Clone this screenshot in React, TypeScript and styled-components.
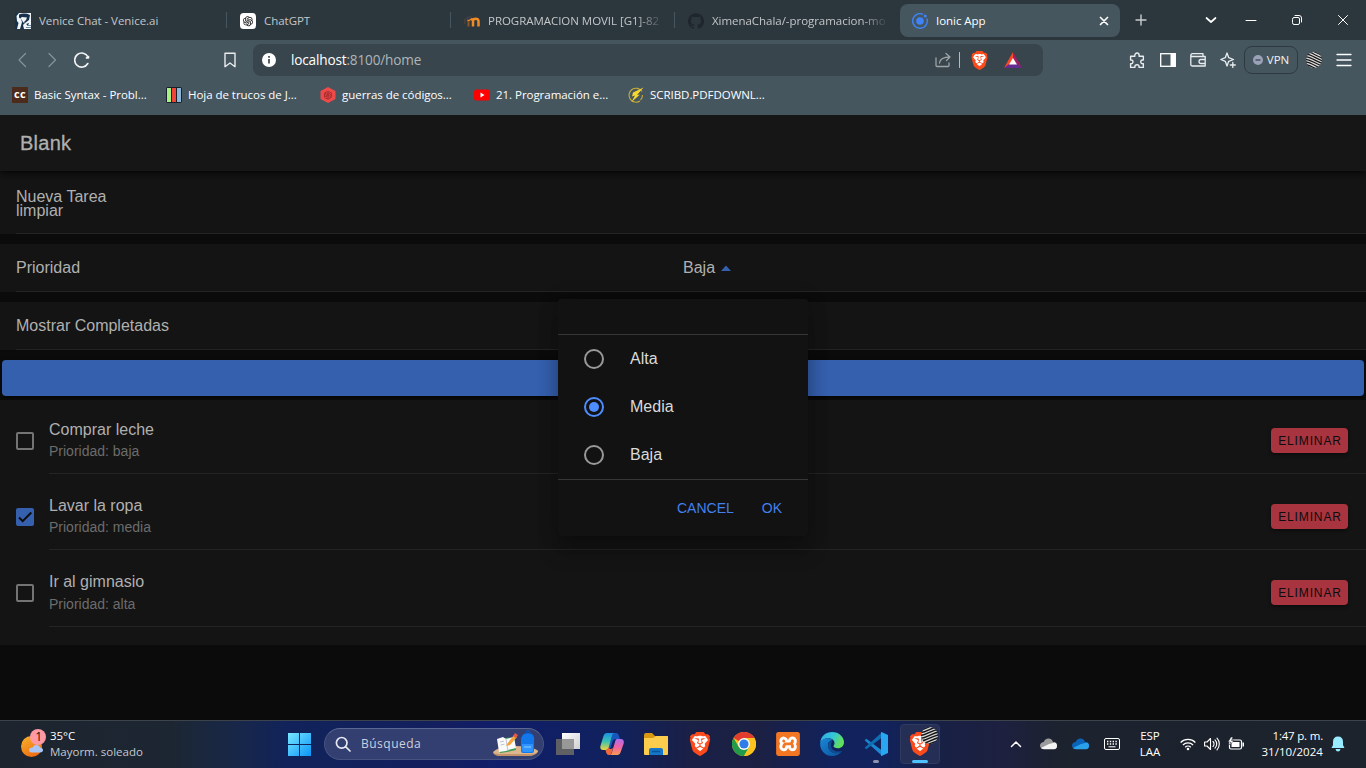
import React from "react";
import styled, { createGlobalStyle, css } from "styled-components";
import { SiBrave, SiGithub, SiXampp } from "react-icons/si";
import { AiOutlineOpenAI } from "react-icons/ai";

const Global = createGlobalStyle`
  * { box-sizing: border-box; }
  body { margin: 0; background: #0b0b0b; overflow: hidden; }
`;

const ui = css`font-family: "Open Sans", "Noto Sans", sans-serif;`;

const Screen = styled.div`
  width: 1366px; height: 768px; display: flex; flex-direction: column; overflow: hidden;
  font-family: "Liberation Sans", Arial, sans-serif;
`;

const Label = styled.span<{ $size?: number; $track?: number; $color?: string }>`
  ${ui}
  display: block; white-space: nowrap; line-height: 16px;
  font-size: ${p => p.$size ?? 11.5}px;
  letter-spacing: ${p => p.$track ?? -0.04}px;
  color: ${p => p.$color ?? "#fff"};
`;

/* ---------- browser ---------- */
const TabStrip = styled.div`
  height: 40px; flex: none; display: flex; background: #2c363d;
`;
const Tab = styled.div<{ $first?: boolean }>`
  width: ${p => (p.$first ? 226 : 224)}px; height: 40px; display: flex; align-items: center; gap: 8px;
  padding: 1px 11px 0 ${p => (p.$first ? 15 : 14)}px;
`;
const TabText = styled.div<{ $fade?: boolean }>`
  flex: 1; overflow: hidden;
  ${p => p.$fade && "mask-image: linear-gradient(90deg, #000 85%, transparent 101%);"}
`;
const Divider = styled.i`
  width: 1px; height: 16px; align-self: center; background: #45565f; margin-right: -1px;
`;
const ActiveTab = styled.div`
  width: 220px; height: 33px; margin: 4px 0 0 2px; padding: 0 10px 0 12px; border-radius: 8px; background: #45565f;
  display: flex; align-items: center; gap: 8px;
  > span { flex: 1; }
`;
const WindowControls = styled.div`
  flex: 1; display: flex; align-items: center; justify-content: flex-end;
`;
const Slot = styled.div<{ $w: number }>`
  width: ${p => p.$w}px; flex: none; display: flex; align-items: center; justify-content: center;
  svg { flex: none; }
`;
const Spacer = styled.div`flex: 1;`;

const Toolbar = styled.div`
  height: 40px; flex: none; display: flex; align-items: center; background: #45565f; padding-left: 8px;
`;
const AddressBar = styled.div`
  width: 790px; height: 32px; border-radius: 8px; background: #39454c; display: flex; align-items: center;
  padding: 0 13px 0 8px; margin-left: 8px; flex: none;
`;
const Url = styled.div`
  ${ui} flex: 1; font-size: 13.6px; letter-spacing: -0.17px; color: #aeb5b8; line-height: 20px; margin-left: 14px;
  b { font-weight: 400; color: #fff; }
`;
const Vpn = styled.div`
  width: 54px; height: 28px; border: 1px solid #2e3a42; border-radius: 8px; display: flex; align-items: center;
  justify-content: center; gap: 4px; margin-left: 2px;
`;
const Bookmarks = styled.div`
  height: 35px; flex: none; display: flex; background: #45565f; padding: 7px 0 0 12px;
`;
const Bookmark = styled.div<{ $w: number }>`
  width: ${p => p.$w}px; height: 16px; display: flex; align-items: center; gap: 6px;
`;
const CcBadge = styled.span`
  ${ui} width: 16px; height: 16px; background: #4c2b1c; color: #fff; font-size: 11px; font-weight: 700; line-height: 14px; text-align: center;
  flex: none; letter-spacing: .4px;
`;

/* ---------- ionic page ---------- */
const Page = styled.main`
  position: relative; height: 605px; flex: none; background: #0b0b0b; color: #b0b0b0; overflow: hidden;
`;
const PageHeader = styled.header`
  position: relative; height: 56px; padding-left: 20px; background: #161616; font-size: 20px; line-height: 56px; font-weight: 500;
  box-shadow: 0 2px 4px -1px rgba(0,0,0,.5), 0 4px 5px rgba(0,0,0,.3);
  span { -webkit-text-stroke: .3px currentColor; letter-spacing: .25px; }
`;
const Item = styled.div<{ $h: number }>`
  height: ${p => p.$h}px; margin-bottom: 10px; padding-left: 16px; background: #141414; font-size: 16px;
`;
const ItemInner = styled.div<{ $stack?: boolean }>`
  height: 100%; border-bottom: 1px solid #242424; display: flex;
  ${p => p.$stack
    ? "flex-direction: column; padding-top: 19px; line-height: 14px;"
    : "line-height: 48px;"}
`;
const Half = styled.div`width: 667px; display: flex; align-items: center; gap: 6px;`;
const AddButton = styled.div`
  height: 36px; margin: 0 2px 4px; border-radius: 4px; background: #3560ae;
  box-shadow: 0 3px 1px -2px rgba(0,0,0,.2), 0 2px 2px rgba(0,0,0,.14), 0 1px 5px rgba(0,0,0,.12);
`;
const TaskList = styled.div`height: 245px; background: #141414;`;
const TaskRow = styled.div<{ $h: number }>`
  height: ${p => p.$h}px; padding-left: 16px; display: flex; gap: 15px; align-items: flex-end;
`;
const Check = styled.div<{ $on?: boolean; $bottom: number }>`
  width: 18px; height: 18px; flex: none; margin-bottom: ${p => p.$bottom}px; border-radius: 2px;
  border: 2px solid ${p => (p.$on ? "#3560ae" : "#747474")};
  background: ${p => (p.$on ? "#3560ae" : "transparent")};
  svg { display: block; margin: -2px; }
`;
const TaskBody = styled.div<{ $h: number }>`
  flex: 1; height: ${p => p.$h}px; border-bottom: 1px solid #242424; display: flex; justify-content: space-between;
  padding-right: 18px;
`;
const TaskTitle = styled.div<{ $gap: number }>`
  font-size: 16px; line-height: 20px; margin-bottom: ${p => p.$gap}px; padding-top: 22px;
`;
const TaskMeta = styled.div`font-size: 14px; line-height: 18px; color: #6c6c6c;`;
const Delete = styled.button`
  width: 77px; height: 25px; margin: 30px 0 0; padding: 1px 0 0 1px; border: 0; border-radius: 4px; background: #a8343f;
  color: #0d0d0d; font: 400 12px/24px "Liberation Sans", Arial, sans-serif; letter-spacing: .86px;
  box-shadow: 0 2px 2px rgba(0,0,0,.25), 0 1px 5px rgba(0,0,0,.12);
`;

const Alert = styled.div`
  position: absolute; left: 558px; top: 184px; width: 250px; height: 237px; border-radius: 3px; background: #121212;
  box-shadow: 0 16px 20px rgba(0,0,0,.25), 0 0 20px rgba(0,0,0,.2); color: #dadada;
`;
const AlertGroup = styled.div`
  margin-top: 35px; border-top: 1px solid #363636; border-bottom: 1px solid #363636; height: 146px;
`;
const Option = styled.div`
  height: 48px; padding-left: 26px; display: flex; align-items: center; gap: 26px; font-size: 16px; line-height: 46px;
  span { padding-bottom: 1px; }
`;
const Radio = styled.i<{ $on?: boolean }>`
  width: 20px; height: 20px; border-radius: 50%; border: 2px solid ${p => (p.$on ? "#4d8dff" : "#999")};
  display: flex; align-items: center; justify-content: center;
  &::after { content: ""; width: 10px; height: 10px; border-radius: 50%; background: ${p => (p.$on ? "#4d8dff" : "transparent")}; }
`;
const AlertActions = styled.div`
  display: flex; justify-content: flex-end; gap: 28px; padding: 19px 26px 0 0; font-size: 14px; line-height: 18px; color: #4480ec;
`;

/* ---------- taskbar ---------- */
const Taskbar = styled.footer`
  height: 48px; flex: none; display: flex; align-items: center; border-top: 1px solid #3d434a; padding-bottom: 1px;
  background: linear-gradient(90deg, #1d242e 0, #1c2632 170px, #182748 235px, #11235a 285px, #131f5e 440px, #101d6a 500px,
    #11215c 620px, #1a2046 690px, #1b2043 760px, #11225c 830px, #11225c 880px, #182044 945px, #1d2040 1000px, #1c222e 1060px, #1c232c 1366px);
`;
const Weather = styled.div`
  width: 277px; display: flex; gap: 3px; padding-left: 20px; align-items: center;
`;
const Search = styled.div`
  width: 220px; height: 32px; margin: 0 2px 0 3px; border-radius: 16px; background: #323f70; border: 1px solid #46527f; border-top-color: #5c6793;
  display: flex; align-items: center; padding: 0 4px 0 10px; gap: 10px;
  > span { flex: 1; }
`;
const AppSlot = styled.div<{ $active?: boolean }>`
  width: ${p => (p.$active ? 40 : 44)}px; height: 40px; position: relative; display: flex; align-items: center; justify-content: center;
  ${p => p.$active && "margin-left: 2px; border-radius: 4px; background: #252f55; border: 1px solid #303a5e;"}
`;
const Running = styled.i<{ $active?: boolean }>`
  position: absolute; bottom: ${p => (p.$active ? 0 : 1)}px; width: ${p => (p.$active ? 16 : 6)}px; height: 3px; border-radius: 2px;
  background: ${p => (p.$active ? "#4cc2ff" : "#8d93ad")};
`;
const BadgeOver = styled.span`position: absolute; right: 1px; top: 2px; display: flex;`;
const TwoLine = styled.div<{ $w: number; $align: string }>`
  width: ${p => p.$w}px; text-align: ${p => p.$align};
`;

const LionShield = ({ s }: { s: number }) => (
  <svg width={s} height={s} viewBox="0 0 24 24">
    <path d="M6 3h12l3 5-3 10-6 5-6-5L3 8z" fill="#fff" />
    <SiBrave size={24} color="#fb4a1c" />
  </svg>
);

const Stripes = ({ s }: { s: number }) => (
  <svg width={s} height={s} viewBox="0 0 16 16">
    <defs><clipPath id={"c" + s}><circle cx="8" cy="8" r="8" /></clipPath></defs>
    <g clipPath={`url(#c${s})`}>
      <rect width="16" height="16" fill="#151515" />
      <g stroke="#d6d6d6" strokeWidth="1.2" fill="none">
        {[-7.5, -4.8, -2.1, 0.6, 3.3, 6, 8.7, 11.4, 14.1].map(y => (
          <path key={y} d={s > 16 ? `M-1 ${y + 6}C5 ${y + 6} 10 ${y + 1} 17 ${y}` : `M-1 ${y}C5 ${y} 10 ${y + 5} 17 ${y + 7}`} />
        ))}
      </g>
    </g>
  </svg>
);

const Venice = () => (
  <svg width="16" height="16" viewBox="0 0 16 16">
    <rect width="16" height="16" fill="#f1f5f8" />
    <path d="M0 0h4L1.500 3 2 8l1.500 2L2 16H0zM4 1.500Q10-.5 15 2l-1 5-4 3H8l3-3 1-2.500-5-.5-2 1.500-1-1zM5.500 5L7 9l-2 7h4l-1-4 2-2-2-1zM11 11l3-1-1 2.500z" fill="#17324d" />
    <path d="M11 14.500h5M12 12.500h4" stroke="#6c8aa3" />
  </svg>
);
const GptIcon = () => (
  <svg width="16" height="16" viewBox="0 0 16 16">
    <rect width="16" height="16" rx="3.5" fill="#fff" />
    <svg x="1.500" y="1.500" width="13" height="13"><AiOutlineOpenAI size={13} color="#222" /></svg>
  </svg>
);
const Moodle = () => (
  <svg width="16" height="16" viewBox="0 0 16 16" fill="none">
    <path d="M4.500 13.500V8" stroke="#8a5426" strokeWidth="2" />
    <path d="M4.500 8q0-2 2.200-2T9 8v5.500M9 8q0-2.200 2.600-2.200T14.500 8v5.500" stroke="#f08a24" strokeWidth="2.500" />
    <path d="M0 5.500l5-3 4 1.500-4 3z" fill="#3a3e44" /><path d="M1 6v5" stroke="#5b4535" />
  </svg>
);
const IonicIcon = () => (
  <svg width="16" height="16" viewBox="0 0 16 16" fill="#3f83f8">
    <circle cx="8" cy="8" r="3.8" /><circle cx="13.200" cy="3" r="1.600" />
    <path d="M10.9 1.3A7.3 7.3 0 1 0 14.8 5.4" fill="none" stroke="#3f83f8" strokeWidth="1.4" />
  </svg>
);
const Line = ({ d, s = 16, w = 1.3, c = "#e9ecee", box = 16, f = "none" }: { d: string; s?: number; w?: number; c?: string; box?: number; f?: string }) => (
  <svg width={s} height={s} viewBox={`0 0 ${box} ${box}`} fill={f} stroke={c} strokeWidth={w} strokeLinecap="round" strokeLinejoin="round"><path d={d} /></svg>
);
const BatIcon = () => (
  <svg width="18" height="16" viewBox="0 0 18 16">
    <path d="M9 0L0 16 9 12z" fill="#ff4724" /><path d="M9 0l9 16-9-6z" fill="#9e1f63" /><path d="M0 16h18l-5-4H5z" fill="#662d91" />
    <path d="M9 6l4 6.500H5z" fill="#fff" />
  </svg>
);
const Chrome = () => (
  <svg width="24" height="24" viewBox="0 0 24 24">
    <circle cx="12" cy="12" r="12" fill="#fcc31e" />
    <path d="M12 12L1.600 6A12 12 0 0 1 22.400 6H12z" fill="#e33b2e" />
    <path d="M1.600 6A12 12 0 0 0 12 24l5.200-9L12 12 6.800 15z" fill="#229a4b" />
    <path d="M12 6h10.400A12 12 0 0 1 12 24l5.200-9z" fill="#fcc31e" />
    <circle cx="12" cy="12" r="5.900" fill="#fff" /><circle cx="12" cy="12" r="4.600" fill="#2f7de9" />
  </svg>
);
const Edge = () => (
  <svg width="24" height="24" viewBox="0 0 24 24">
    <defs>
      <linearGradient id="eg" x1="0" y1="0" x2="1" y2=".4"><stop offset="0" stopColor="#2aa9e6" /><stop offset=".55" stopColor="#35c6d8" /><stop offset="1" stopColor="#62e05a" /></linearGradient>
      <linearGradient id="eb" x1="0" y1="0" x2=".8" y2="1"><stop offset="0" stopColor="#1b86d6" /><stop offset="1" stopColor="#0c59a4" /></linearGradient>
    </defs>
    <path d="M.2 10.500C1 4 6 0 12 0c7 0 12 5 12 10.200 0 3.800-2.800 6-6 6-3 0-4.500-1.200-4.500-2 0-.7 1-1.200 1-3.200 0-2.500-2.200-4.800-6-4.800C4.500 6.200 1.500 8 .2 10.500z" fill="url(#eg)" />
    <path d="M.2 10.500C1.500 7.500 4.500 6.200 8 6.200c2 0 4 .8 5 2-3-.5-5 2-5 5.300 0 5 5 8.500 9.500 7.500 2-.4 3.500-1.300 4.500-2C20 22 16 24 12 24 5 24-.6 18 .2 10.500z" fill="url(#eb)" />
    <path d="M8 13.500C8 17 10.500 21 16 21.200c2.500 0 4.500-1 6-2.200-6 1.500-11-.5-11-6 0-1.500.8-3 1.600-4C10 8.500 8 10.500 8 13.500z" fill="#104c92" />
  </svg>
);
const VsCode = () => (
  <svg width="24" height="24" viewBox="0 0 24 24">
    <path d="M.6 8.200L2.300 6.700 18 18.500v5.300z" fill="#1a87d2" />
    <path d="M.6 15.800l1.700 1.500L18 5.500V.2z" fill="#0d6eb4" />
    <path d="M17.500 0L24 3v18l-6.500 3c-.7 0-.5-.5-.5-1V1c0-.5-.2-1 .5-1z" fill="#2aa5f0" />
  </svg>
);
const Copilot = () => (
  <svg width="24" height="24" viewBox="0 0 24 24">
    <defs>
      <linearGradient id="ca" x1="0" y1="0" x2="0" y2="1"><stop offset="0" stopColor="#1b8fe6" /><stop offset=".5" stopColor="#3cc3b0" /><stop offset="1" stopColor="#f1d33c" /></linearGradient>
      <linearGradient id="cb" x1="0" y1="0" x2="0" y2="1"><stop offset="0" stopColor="#b06df0" /><stop offset=".5" stopColor="#ef63a4" /><stop offset="1" stopColor="#fb9b52" /></linearGradient>
    </defs>
    <path d="M13 1h3c2 0 2.500 1.500 3 3l1 3h-4c-2 0-3 1-3.500 3l-2 6H8z" fill="#1757bd" />
    <path d="M7 1h7c-1 .5-1.700 2-2 3L8.800 15c-.5 2-1.500 3-3 3H3c-3 0-3-3-2.300-5L3.500 4C4.200 2 5 1 7 1z" fill="url(#ca)" />
    <path d="M17 7h4c3 0 3.200 3 2.500 5l-2.800 8c-.7 2-1.700 3-3.500 3H10c1-.5 1.700-1.500 2-3l3-10c.5-2 1-3 2-3z" fill="url(#cb)" />
    <path d="M8.500 15.500L10 17h1l2-1-1.500 5c-.5 1.500-1 2-2.500 2-2 0-2.500-1.500-3-3l-.5-2c1.500 0 2.500-1 3-2.500z" fill="#f0683c" />
  </svg>
);

const Cloud = ({ a, b }: { a: string; b: string }) => (
  <svg width="17" height="12" viewBox="0 0 17 12">
    <path d="M3.500 4.500C4.500 1 7.500 0 10 .8c1.700.5 2.500 1.800 3 3.200 2.500 0 4 2 4 4L7 8z" fill={a} />
    <path d="M4 4c2-.5 3 0 4 .8L17 8c0 2-1.200 3-3 3H3.800C1.500 11 0 9.500 0 7.500S2 4 4 4z" fill={a} />
    <path d="M1 10l8-4 6-1.500c1.500.5 2 1.800 2 3.500 0 2-1.200 3.200-3 3.200H3.800C2.500 11.200 1.500 10.700 1 10z" fill={b} />
  </svg>
);

const tasks = [
  { title: "Comprar leche", priority: "baja", done: false, h: 74, body: 76, gap: 2 },
  { title: "Lavar la ropa", priority: "media", done: true, h: 76, body: 76, gap: 2 },
  { title: "Ir al gimnasio", priority: "alta", done: false, h: 77, body: 77, gap: 3 },
];

export default function App() {
  return (
    <Screen>
      <Global />
      <TabStrip>
        <Tab $first><Venice /><TabText><Label $color="#c3c7c9">Venice Chat - Venice.ai</Label></TabText></Tab>
        <Divider />
        <Tab><GptIcon /><TabText><Label $color="#c3c7c9">ChatGPT</Label></TabText></Tab>
        <Divider />
        <Tab><Moodle /><TabText $fade><Label $color="#c3c7c9">PROGRAMACION MOVIL [G1]-82</Label></TabText></Tab>
        <Divider />
        <Tab><SiGithub size={16} color="#1f262d" style={{ flex: "none" }} /><TabText $fade><Label $color="#c3c7c9">XimenaChala/-programacion-mo</Label></TabText></Tab>
        <ActiveTab>
          <IonicIcon /><Label>Ionic App</Label>
          <Line s={12} box={12} w={1.7} c="#fff" d="M2.500 2.500l7 7M9.500 2.500l-7 7" />
        </ActiveTab>
        <Slot $w={42}><Line s={12} box={12} c="#c8ccce" w={1.4} d="M6 1v10M1 6h10" /></Slot>
        <WindowControls>
          <Slot $w={36}><Line s={12} box={12} c="#fff" w={1.7} d="M1.500 4L6 8l4.500-4" /></Slot>
          <Slot $w={44}><Line s={12} box={12} c="#fff" w={1} d="M1 6.500h10" /></Slot>
          <Slot $w={47}><Line s={12} box={12} c="#fff" w={1} d="M1.500 5q0-1.500 1.500-1.500h4Q8.500 3.500 8.500 5v4q0 1.500-1.500 1.500H3Q1.500 10.500 1.500 9zM4 1.500h4Q10.500 1.500 10.500 4v4" /></Slot>
          <Slot $w={46}><Line s={12} box={12} c="#fff" w={1} d="M1.500 1.500l9 9M10.500 1.500l-9 9" /></Slot>
        </WindowControls>
      </TabStrip>

      <Toolbar>
        <Slot $w={29}><Line c="#87949a" d="M10.500 1.500L4 8l6.500 6.500" w={1.2} /></Slot>
        <Slot $w={30}><Line c="#87949a" d="M5 1.500L11.500 8 5 14.500" w={1.2} /></Slot>
        <Slot $w={30}><Line w={1.6} c="#f2f4f5" d="M13.800 11.500A7 7 0 1 1 14 5M14.500 6V4.500L12.500 6z" /></Slot>
        <Slot $w={117} />
        <Slot $w={31}><Line w={1.4} d="M3 1.200h10v13.500L8 11l-5 3.700z" /></Slot>
        <AddressBar>
          <svg width="16" height="16" viewBox="0 0 16 16"><circle cx="8" cy="8" r="7" fill="#fff" /><path d="M8 7v4.500M8 4v1.700" stroke="#39454c" strokeWidth="1.7" /></svg>
          <Url><b>localhost</b>:8100/home</Url>
          <Slot $w={24}><Line c="#9ba3a7" w={1.3} d="M1 6v7.500q0 1 1 1h11q1 0 1-1V11M4.500 11C5 7 8 5 15 5M11 1.500L15 5l-3.500 3.500" /></Slot>
          <Slot $w={8}><Line s={16} c="#b5bbbe" w={1} d="M8.500 .5v15" /></Slot>
          <Slot $w={32}><LionShield s={19} /></Slot>
          <Slot $w={35}><BatIcon /></Slot>
        </AddressBar>
        <Spacer />
        <Slot $w={31}><Line s={17} d="M1.500 4h4V3a2 2 0 0 1 4 0v1h4v3.500h-.7a1.700 1.700 0 0 0 0 3.500h.7v3.500h-4V14a2 2 0 0 0-4 0v.5h-4V11H2a1.700 1.700 0 0 0 0-3.500h-.5z" /></Slot>
        <Slot $w={30}><svg width="16" height="16" viewBox="0 0 16 16"><rect x=".7" y="1.700" width="14.600" height="12.600" fill="none" stroke="#fff" strokeWidth="1.300" /><path d="M10.500 1h5v14h-5z" fill="#fff" /></svg></Slot>
        <Slot $w={30}><Line d="M.8 3.500Q.8 1.700 2.500 1.700H13V4M.8 3.500Q1 4.500 2.500 4.500H15.200V14H2.500Q.8 14 .8 12.500zM15 7.500h-4a1.800 1.800 0 0 0 0 4h4" /></Slot>
        <Slot $w={29}><Line d="M7 1l1.700 4.700L13.500 7.500 8.700 9.300 7 14 5.300 9.300.8 7.500l4.500-1.800zM12.800 10.500v5M10.300 13h5" /></Slot>
        <Vpn>
          <svg width="10" height="10"><circle cx="5" cy="5" r="5" fill="#9ba1b8" /><path d="M2.500 5h5" stroke="#45565f" strokeWidth="1.500" /></svg>
          <Label $color="#f0f2f3">VPN</Label>
        </Vpn>
        <Slot $w={32}><Stripes s={16} /></Slot>
        <Slot $w={28}><Line c="#fff" w={1.3} d="M1 2.500h14M1 8h14M1 13.500h14" /></Slot>
        <Slot $w={8} />
      </Toolbar>

      <Bookmarks>
        <Bookmark $w={154}><CcBadge>cc</CcBadge><Label>Basic Syntax - Probl...</Label></Bookmark>
        <Bookmark $w={154}>
          <svg width="16" height="16"><rect width="16" height="16" rx="2" fill="#17202a" /><path d="M1 1h4v14H1z" fill="#a6f37d" /><path d="M6 1h4v14H6z" fill="#f0433a" /><path d="M11 1h4v14h-4z" fill="#8fb4d6" /></svg>
          <Label>Hoja de trucos de J...</Label>
        </Bookmark>
        <Bookmark $w={154}>
          <svg width="16" height="16"><path d="M8 0l7.500 4v8L8 16 .5 12V4z" fill="#ee4a4a" /><svg x="2.500" y="2.500" width="11" height="11"><AiOutlineOpenAI size={11} color="#8f2426" /></svg></svg>
          <Label>guerras de códigos...</Label>
        </Bookmark>
        <Bookmark $w={154}>
          <svg width="16" height="16"><rect y="2.500" width="16" height="11" rx="2.500" fill="#f00" /><path d="M6.500 5.500v5l4-2.500z" fill="#fff" /></svg>
          <Label>21. Programación e...</Label>
        </Bookmark>
        <Bookmark $w={160}>
          <svg width="16" height="16" fill="none"><path d="M14 4.500A7 7 0 1 0 12 14M14.500 8q0 3-2 5" stroke="#c9ab35" strokeWidth="1.100" /><path d="M15.500.5L5 5.500 4 9.500l3-1L3.500 15 12 7.500l-3 .5z" fill="#f6d52e" /></svg>
          <Label>SCRIBD.PDFDOWNL...</Label>
        </Bookmark>
      </Bookmarks>

      <Page>
        <PageHeader><span>Blank</span></PageHeader>
        <Item $h={63}><ItemInner $stack><div>Nueva Tarea</div><div>limpiar</div></ItemInner></Item>
        <Item $h={48}>
          <ItemInner>
            <Half>Prioridad</Half>
            <Half>Baja<svg width="10" height="6"><path d="M0 6l5-5.500L10 6z" fill="#3560ae" /></svg></Half>
          </ItemInner>
        </Item>
        <Item $h={48}><ItemInner>Mostrar Completadas</ItemInner></Item>
        <AddButton />
        <TaskList>
          {tasks.map(t => (
            <TaskRow key={t.title} $h={t.h}>
              <Check $on={t.done} $bottom={t.body - 52}>
                {t.done && <svg width="18" height="18"><path d="M3 9.500l3.700 3.700L15.300 4.500" fill="none" stroke="#0c0c0c" strokeWidth="2" /></svg>}
              </Check>
              <TaskBody $h={t.body}>
                <div><TaskTitle $gap={t.gap}>{t.title}</TaskTitle><TaskMeta>Prioridad: {t.priority}</TaskMeta></div>
                <Delete>ELIMINAR</Delete>
              </TaskBody>
            </TaskRow>
          ))}
        </TaskList>
        <Alert>
          <AlertGroup>
            <Option><Radio /><span>Alta</span></Option>
            <Option><Radio $on /><span>Media</span></Option>
            <Option><Radio /><span>Baja</span></Option>
          </AlertGroup>
          <AlertActions><span>CANCEL</span><span>OK</span></AlertActions>
        </Alert>
      </Page>

      <Taskbar>
        <Weather>
          <svg width="27" height="30" viewBox="0 0 27 30">
            <defs><linearGradient id="sun" x1="0" y1="0" x2=".6" y2="1"><stop offset="0" stopColor="#f8b62c" /><stop offset="1" stopColor="#f06c12" /></linearGradient></defs>
            <circle cx="11.500" cy="17.500" r="10.500" fill="url(#sun)" />
            <path d="M12 23.500q-3 0-3-2.500t3.500-2.500q1-3 4-2.500 3 0 3.500 2.500 3 .5 3 2.500t-3 2.500z" fill="#a9c6f7" />
            <circle cx="18" cy="8" r="8" fill="#ff99a4" />
            <text x="15.200" y="12.300" fontFamily="Open Sans" fontSize="12" fill="#111">1</text>
          </svg>
          <div><Label>35°C</Label><Label $color="#c6c9cc" $track={0}>Mayorm. soleado</Label></div>
        </Weather>
        <AppSlot>
          <svg width="24" height="24">
            <defs><linearGradient id="win" x1="0" y1="0" x2="24" y2="24" gradientUnits="userSpaceOnUse"><stop offset="0" stopColor="#7deaff" /><stop offset="1" stopColor="#0a96f8" /></linearGradient></defs>
            <path d="M1 1h11v11H1zM13 1h11v11H13zM1 13h11v11H1zM13 13h11v11H13z" fill="url(#win)" />
          </svg>
        </AppSlot>
        <Search>
          <Line w={1.7} c="#e6e8f0" d="M12 6.800A5.300 5.300 0 1 1 1.400 6.800 5.300 5.300 0 0 1 12 6.800zM10.600 10.600L15 15" />
          <Label $size={12} $color="#cdd1de" $track={0.5}>Búsqueda</Label>
          <svg width="47" height="28" viewBox="0 0 47 28">
            <path d="M1 22q6-6 22-6t22 4q2 1 0 3-3 3-10 3H10Q2 26 1 22z" fill="#dcb68c" />
            <path d="M1 22.500q3 1.500 9 1.500h27q6 0 8.500-2-3 4-10 4H10Q2 26 1 22.500z" fill="#c4936a" />
            <path d="M6 10l7-2 9-1 2 13-9 2-7 1z" fill="#3f9b58" /><path d="M5 9l6-2 3 2 8-2 2 11-8 2-2 1-7 1z" fill="#fafafa" />
            <path d="M14 9l2 12M8 12l4-.8M8.500 15l4-.8M17 12l4-1" stroke="#bcc6cf" />
            <path d="M15 14l7-9 3 2-7 8-4 1z" fill="#f6a33c" /><path d="M21 6l2-3 3 2-2 3z" fill="#e2574e" />
            <path d="M29 11q0-8 7-8t6 8v10q0 2-2 2H31q-2 0-2-2z" fill="#1177ea" /><path d="M34 4q0-3 2-3t2 3" fill="none" stroke="#0b56c5" strokeWidth="1.500" />
            <path d="M30 14h11v6q0 2-2 2h-7q-2 0-2-2z" fill="#2f94ff" /><path d="M32 17h7" stroke="#8fd0ff" />
          </svg>
        </Search>
        <AppSlot>
          <svg width="24" height="24">
            <defs><linearGradient id="tv" x1="0" y1="0" x2="1" y2="1"><stop offset="0" stopColor="#fff" /><stop offset="1" stopColor="#cfcfcf" /></linearGradient></defs>
            <path d="M6 1h18v16H6z" fill="url(#tv)" /><path d="M0 7h18v16H0z" fill="#5f6063" /><path d="M6 7h12v10H6z" fill="#989898" />
          </svg>
        </AppSlot>
        <AppSlot><Copilot /></AppSlot>
        <AppSlot>
          <svg width="24" height="24">
            <path d="M0 3q0-2 2-2h6l3 3H24v5H0z" fill="#d9980f" /><path d="M0 6h9l3-2h11q1 0 1 1v17q0 1-1 1H1q-1 0-1-1z" fill="#fccd4d" />
            <path d="M5 23v-5q0-2 2-2h10q2 0 2 2v5z" fill="#1577c6" /><path d="M8 19.500h8" stroke="#0b559c" strokeWidth="1.500" />
          </svg>
        </AppSlot>
        <AppSlot><LionShield s={24} /></AppSlot>
        <AppSlot><Chrome /></AppSlot>
        <AppSlot><svg width="24" height="24"><rect x="1" y="1" width="22" height="22" fill="#fff" /><SiXampp size={24} color="#f37623" /></svg></AppSlot>
        <AppSlot><Edge /></AppSlot>
        <AppSlot><VsCode /><Running /></AppSlot>
        <AppSlot $active><LionShield s={24} /><BadgeOver><Stripes s={17} /></BadgeOver><Running $active /></AppSlot>
        <Spacer />
        <Slot $w={32}><Line s={12} box={12} w={1.5} c="#fff" d="M1.500 8.500L6 4l4.500 4.500" /></Slot>
        <Slot $w={32}><Cloud a="#9b9b9b" b="#f4f4f4" /></Slot>
        <Slot $w={32}><Cloud a="#0a63b8" b="#2aa0e8" /></Slot>
        <Slot $w={32}>
          <svg width="16" height="12" fill="none" stroke="#fff"><rect x=".5" y=".5" width="15" height="11" rx="1.500" /><path d="M3 3.500h10M3 6h10" strokeDasharray="1.400 1.400" strokeWidth="1.300" /><path d="M4.500 8.800h7" /></svg>
        </Slot>
        <TwoLine $w={44} $align="center"><Label>ESP</Label><Label>LAA</Label></TwoLine>
        <Slot $w={32}>
          <svg width="16" height="14" fill="none" stroke="#fff" strokeWidth="1.200"><path d="M.6 5.500a10.500 10.500 0 0 1 14.800 0M2.900 8a7.200 7.200 0 0 1 10.200 0M5.200 10.300a4 4 0 0 1 5.600 0" /><circle cx="8" cy="12" r="1.300" fill="#fff" stroke="none" /></svg>
        </Slot>
        <Slot $w={16}><Line w={1.1} c="#fff" d="M.6 6h2.400L6.500 2.500v11L3 10H.6zM9 5.500a3.500 3.500 0 0 1 0 5M11 3.800a6 6 0 0 1 0 8.400M13 2.200a8.500 8.500 0 0 1 0 11.600" /></Slot>
        <Slot $w={32}>
          <svg width="16" height="16"><rect x="1.500" y="4" width="12" height="9" rx="1.500" fill="none" stroke="#fff" strokeWidth="1.200" /><path d="M3.500 6h8v5h-8zM14.500 6.500H16v4h-1.500z" fill="#fff" /><path d="M3 1L0 6h2.500L1.500 9 6 4.500H3.500L5 1z" fill="#fff" stroke="#1c232c" strokeWidth=".5" /></svg>
        </Slot>
        <TwoLine $w={71} $align="right"><Label $track={-0.2}>1:47 p. m.</Label><Label $track={0.05}>31/10/2024</Label></TwoLine>
        <Slot $w={30}>
          <svg width="14" height="16"><path d="M7 .5q5 0 5 5.500v3l1.500 3H.5L2 9V6Q2 .5 7 .5zM4.500 13h5Q9 15.500 7 15.500T4.500 13z" fill="#99ebff" /></svg>
        </Slot>
        <Slot $w={13} />
      </Taskbar>
    </Screen>
  );
}
